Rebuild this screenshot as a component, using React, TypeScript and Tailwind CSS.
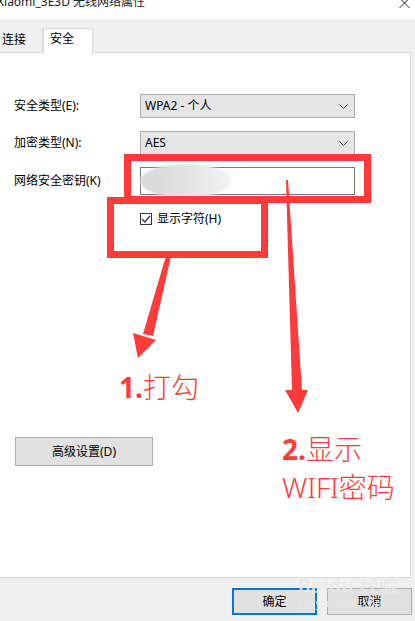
import React from 'react';

const Chevron = () => (
    <svg width="9" height="5" viewBox="0 0 9 5" className="mr-[6px]">
        <path d="M0.5 0.5 L4.5 4.5 L8.5 0.5" fill="none" stroke="#444" strokeWidth="1" />
    </svg>
);

const Combo = ({ value }: { value: string }) => (
    <div className="w-[215px] h-[24px] bg-[#e5e5e5] border border-[#adadad] flex items-center justify-between pl-[4px]">
        <span>{value}</span>
        <Chevron />
    </div>
);

const App = () => {
    return (
        <div className="relative w-[415px] h-[621px] overflow-hidden bg-[#f0f0f0] text-[12px] text-black font-['Noto_Sans','Noto_Sans_CJK_SC',sans-serif]">
            {/* title bar */}
            <div className="h-[19px] bg-white flex justify-between overflow-hidden">
                <span className="-ml-[3px] -mt-[6px] leading-[16px] text-[#222]">Xiaomi_3E3D 无线网络属性</span>
                <svg width="11" height="10" viewBox="0 0 11 10" className="mr-[5px] -mt-[2px]">
                    <path d="M0.5 0 L10.5 10 M10.5 0 L0.5 10" stroke="#222" strokeWidth="1" />
                </svg>
            </div>

            {/* tabs */}
            <div className="h-[33px] flex items-end">
                <div className="w-[43px] h-[22px] border-r border-[#d9d9d9] pl-[2px] leading-[20px]">连接</div>
                <div className="relative z-10 w-[50px] h-[25px] bg-white border border-b-0 border-[#d9d9d9] -mb-px pl-[6px] leading-[20px]">安全</div>
            </div>

            {/* panel */}
            <div className="w-[411px] h-[526px] bg-white border-t border-r border-b border-[#d9d9d9]">
                <div className="mt-[41px] flex items-center">
                    <div className="w-[140px] pl-[14px]">安全类型(E):</div>
                    <Combo value="WPA2 - 个人" />
                </div>
                <div className="mt-[13px] flex items-center">
                    <div className="w-[140px] pl-[14px]">加密类型(N):</div>
                    <Combo value="AES" />
                </div>
                <div className="mt-[12px] flex items-center">
                    <div className="w-[140px] pl-[14px]">网络安全密钥(K)</div>
                    <div className="w-[215px] h-[28px] border border-[#7a7a7a] bg-white" />
                </div>
                <div className="mt-[17px] pl-[140px] flex items-center h-[13px]">
                    <div className="w-[12px] h-[12px] border border-[#333] flex items-center justify-center">
                        <svg width="10" height="8" viewBox="0 0 10 8">
                            <path d="M1 4 L3.8 7 L9 1" fill="none" stroke="#333" strokeWidth="1.2" />
                        </svg>
                    </div>
                    <span className="ml-[5px]">显示字符(H)</span>
                </div>
                <div className="mt-[212px] ml-[15px] w-[138px] h-[29px] bg-[#e1e1e1] border border-[#adadad] flex items-center justify-center">
                    高级设置(D)
                </div>
            </div>

            {/* footer buttons */}
            <div className="flex justify-end gap-[10px] pr-[3px] pt-[10px]">
                <div className="w-[85px] h-[27px] bg-[#e1e1e1] border-2 border-[#0078d7] flex items-center justify-center">确定</div>
                <div className="w-[85px] h-[27px] bg-[#e1e1e1] border border-[#adadad] flex items-center justify-center">取消</div>
            </div>

            {/* blurred password */}
            <div className="absolute left-[140px] top-[164px] w-[92px] h-[34px] rounded-[50%] bg-gradient-to-r from-[#d8d8d8] via-[#e2e2e2] to-[#f4f4f4] blur-[1px]" />

            {/* annotation boxes */}
            <div className="absolute left-[124px] top-[154px] w-[247px] h-[49px] border-[7px] border-[#fe3a3a]" />
            <div className="absolute left-[107px] top-[197px] w-[161px] h-[61px] border-[7px] border-[#fe3a3a]" />

            {/* arrows */}
            <svg className="absolute left-0 top-0" width="415" height="621" viewBox="0 0 415 621">
                <polygon points="166,256 171,256 153,336 143,334" fill="#fe3a3a" />
                <polygon points="133,333 156,340 138,358" fill="#fe3a3a" />
                <polygon points="286,180 288,180 302,391 292,391" fill="#fe3a3a" />
                <polygon points="285,390 308,390 298,413" fill="#fe3a3a" />
            </svg>

            {/* annotation text */}
            <div className="absolute left-[119px] top-[373px] text-[28px] leading-[28px] font-light text-[#fe3a3a]">
                <span className="font-bold">1.</span>打勾
            </div>
            <div className="absolute left-[282px] top-[430px] text-[28px] leading-[38px] font-light text-[#fe3a3a]">
                <div><span className="font-bold">2.</span>显示</div>
                <div>WIFI密码</div>
            </div>

            {/* watermark */}
            <div className="absolute left-[298px] top-[577px] text-[#e8e8e8] opacity-80 leading-none pointer-events-none">
                <div className="text-[19px] font-bold tracking-wide">Baidu 经验</div>
                <div className="text-[10px] mt-[2px]">jingyan.baidu.com</div>
            </div>
        </div>
    );
};

export default App;
